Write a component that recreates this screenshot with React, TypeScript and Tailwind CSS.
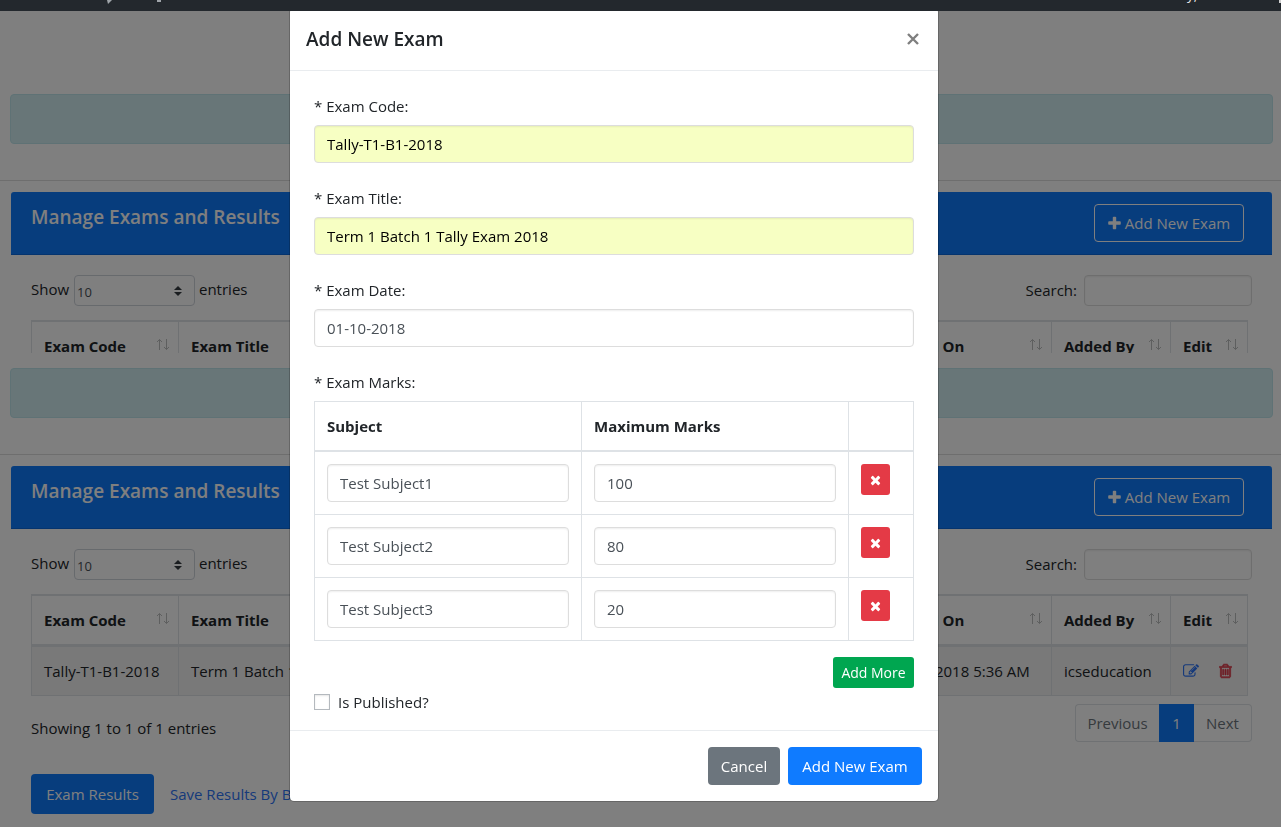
import React, { useState } from 'react';

interface Subject {
    name: string;
    marks: string;
}

interface ExamRow {
    code: string;
    title: string;
    date: string;
    addedOn: string;
    addedBy: string;
}

const exams: ExamRow[] = [
    {
        code: 'Tally-T1-B1-2018',
        title: 'Term 1 Batch 1 Tally Exam 2018',
        date: '01-10-2018',
        addedOn: '01-10-2018 5:36 AM',
        addedBy: 'icseducation',
    },
];

const columns = [
    { label: 'Exam Code', width: 'w-[147px]' },
    { label: 'Exam Title', width: '' },
    { label: 'Exam Date', width: 'w-[160px]' },
    { label: 'Added On', width: 'w-[173px]' },
    { label: 'Added By', width: 'w-[119px]' },
    { label: 'Edit', width: 'w-[77px]' },
];

const inputClass = 'block w-full h-[38px] px-3 border border-[#dddddd] rounded bg-white text-[#495057] shadow-[inset_0_1px_2px_rgba(0,0,0,0.07)]';

const PlusIcon = () => (
    <svg viewBox="0 0 1408 1792" className="h-4 w-[13px]" fill="currentColor" aria-hidden="true">
        <path d="M1408 800v192q0 40-28 68t-68 28h-416v416q0 40-28 68t-68 28h-192q-40 0-68-28t-28-68v-416h-416q-40 0-68-28t-28-68v-192q0-40 28-68t68-28h416v-416q0-40 28-68t68-28h192q40 0 68 28t28 68v416h416q40 0 68 28t28 68z" />
    </svg>
);

const TimesIcon = () => (
    <svg viewBox="0 0 1408 1792" className="h-[14px] w-[11px]" fill="currentColor" aria-hidden="true">
        <path d="M1298 1322q0 40-28 68l-136 136q-28 28-68 28t-68-28l-294-294-294 294q-28 28-68 28t-68-28l-136-136q-28-28-28-68t28-68l294-294-294-294q-28-28-28-68t28-68l136-136q28-28 68-28t68 28l294 294 294-294q28-28 68-28t68 28l136 136q28 28 28 68t-28 68l-294 294 294 294q28 28 28 68z" />
    </svg>
);

const EditIcon = () => (
    <svg viewBox="0 0 1792 1792" className="size-4" fill="currentColor" aria-hidden="true">
        <path d="M888 1184l116-116-152-152-116 116v56h96v96h56zm440-720q-16-16-33 1l-350 350q-17 17-1 33t33-1l350-350q17-17 1-33zm80 594v190q0 119-84.5 203.5t-203.5 84.5h-832q-119 0-203.5-84.5t-84.5-203.5v-832q0-119 84.5-203.5t203.5-84.5h832q63 0 117 25 15 7 18 23 3 17-9 29l-49 49q-14 14-32 8-23-6-45-6h-832q-66 0-113 47t-47 113v832q0 66 47 113t113 47h832q66 0 113-47t47-113v-126q0-13 9-22l64-64q15-15 35-7t20 29zm-96-738l288 288-672 672h-288v-288zm444 132l-92 92-288-288 92-92q28-28 68-28t68 28l152 152q28 28 28 68t-28 68z" />
    </svg>
);

const TrashIcon = () => (
    <svg viewBox="0 0 1408 1792" className="h-4 w-[13px]" fill="currentColor" stroke="currentColor" strokeWidth="70" aria-hidden="true">
        <path d="M512 736v576q0 14-9 23t-23 9h-64q-14 0-23-9t-9-23v-576q0-14 9-23t23-9h64q14 0 23 9t9 23zm256 0v576q0 14-9 23t-23 9h-64q-14 0-23-9t-9-23v-576q0-14 9-23t23-9h64q14 0 23 9t9 23zm256 0v576q0 14-9 23t-23 9h-64q-14 0-23-9t-9-23v-576q0-14 9-23t23-9h64q14 0 23 9t9 23zm128 724v-948h-896v948q0 22 7 40.500t14.500 27 10.500 8.500h832q3 0 10.500-8.500t14.500-27 7-40.500zm-672-1076h448l-48-117q-7-9-17-11h-317q-10 2-17 11zm928 32v64q0 14-9 23t-23 9h-96v948q0 83-47 143.500t-113 60.500h-832q-66 0-113-58.500t-47-141.500v-952h-96q-14 0-23-9t-9-23v-64q0-14 9-23t23-9h309l70-167q15-37 54-63t79-26h320q40 0 79 26t54 63l70 167h309q14 0 23 9t9 23z" />
    </svg>
);

const SortIcon = () => (
    <svg viewBox="0 0 14 13" className="h-[13px] w-[14px] text-[#bcbebf]" fill="none" stroke="currentColor" aria-hidden="true">
        <path d="M3.500 12V1.500M1 4l2.500-2.500L6 4M10.500 1v10.500M8 9l2.500 2.500L13 9" />
    </svg>
);

const AdminBar = () => (
    <header className="relative z-20 h-[11px] overflow-hidden bg-[#23282d]">
        <div className="flex justify-between text-[13px] leading-4 text-[#eeeeee]">
            <svg width="180" height="11" viewBox="0 0 180 11" fill="#a0a5aa" aria-hidden="true">
                <path d="M107 0h5l-4 4zM157 0h4v2h-4z" />
            </svg>
            <div className="-mt-[13px] flex">
                <span className="mr-[82px]">Howdy,</span>
                <span className="mt-[13px] h-[3px] w-[2px] bg-[#d0d0d0]" />
            </div>
        </div>
    </header>
);

const ExamPanel: React.FC<{ id: string; clipped?: boolean }> = ({ id, clipped }) => (
    <section>
        <div className="mr-2 ml-[10px] h-[50px] rounded border border-[#bee5eb] bg-[#d1ecf1]" />
        <hr className="mt-9 mb-[11px] border-[#dddddd]" />
        <div className="mr-[9px] ml-[11px]">
            <div className="flex items-start justify-between rounded-t-[3px] border-b border-[#0a68dd] bg-[#0f7afb] py-3 pr-7 pl-5 text-white">
                <h2 className="text-[19px] leading-[26px] font-semibold">Manage Exams and Results</h2>
                <button type="button" className="flex h-[38px] w-[150px] items-center justify-center gap-1 rounded border border-white">
                    <PlusIcon />
                    Add New Exam
                </button>
            </div>
            <div className={clipped ? 'h-[98px] overflow-hidden px-5 pt-5' : 'px-5 pt-5'}>
                <div className="flex justify-between">
                    <div className="flex items-start gap-1">
                        <label htmlFor={`${id}-length`} className="w-[39px] leading-7">Show</label>
                        <div className="relative">
                            <select
                                id={`${id}-length`}
                                defaultValue="10"
                                className="h-[31px] w-[121px] appearance-none rounded border border-[#ced4da] bg-white pt-[2px] pl-[2px] text-[13px] text-[#495057]"
                            >
                                <option>10</option>
                                <option>25</option>
                                <option>50</option>
                                <option>100</option>
                            </select>
                            <svg viewBox="0 0 4 5" className="pointer-events-none absolute top-[11px] right-[13px] h-[10px] w-2" fill="#343a40" aria-hidden="true">
                                <path d="M2 0L0 2h4zm0 5L0 3h4z" />
                            </svg>
                        </div>
                        <span className="leading-7">entries</span>
                    </div>
                    <div className="flex gap-[7px]">
                        <label htmlFor={`${id}-search`} className="leading-[30px]">Search:</label>
                        <input id={`${id}-search`} type="search" className="h-[31px] w-[168px] rounded border border-[#dddddd] px-2 text-sm shadow-[inset_0_1px_2px_rgba(0,0,0,0.07)]" />
                    </div>
                </div>
                <div className="mt-[14px] pr-1">
                    <table className="w-full table-fixed border-collapse border border-[#dee2e6]">
                        <thead>
                            <tr className="border-t-2 border-b-3 border-[#dee2e6]">
                                {columns.map((column) => (
                                    <th key={column.label} className={`border-x border-[#dee2e6] pt-3 pr-2 pb-3 pl-3 text-left font-bold whitespace-nowrap ${column.width}`}>
                                        <span className="flex items-start justify-between">
                                            {column.label}
                                            <span className="pt-1"><SortIcon /></span>
                                        </span>
                                    </th>
                                ))}
                            </tr>
                        </thead>
                        {!clipped && (
                            <tbody>
                                {exams.map((exam) => (
                                    <tr key={exam.code} className="bg-[#f2f2f2]">
                                        <td className="border border-[#dee2e6] p-3 whitespace-nowrap">{exam.code}</td>
                                        <td className="border border-[#dee2e6] p-3 whitespace-nowrap">{exam.title}</td>
                                        <td className="border border-[#dee2e6] p-3 whitespace-nowrap">{exam.date}</td>
                                        <td className="border border-[#dee2e6] p-3 whitespace-nowrap">{exam.addedOn}</td>
                                        <td className="border border-[#dee2e6] p-3 whitespace-nowrap">{exam.addedBy}</td>
                                        <td className="border border-[#dee2e6] p-3">
                                            <span className="flex items-center gap-5">
                                                <button type="button" aria-label="Edit exam" className="text-[#2d74f5]"><EditIcon /></button>
                                                <button type="button" aria-label="Delete exam" className="text-[#dc3545]"><TrashIcon /></button>
                                            </span>
                                        </td>
                                    </tr>
                                ))}
                            </tbody>
                        )}
                    </table>
                </div>
                {!clipped && (
                    <>
                        <div className="mt-2 flex items-start justify-between">
                            <p className="pt-3">Showing 1 to 1 of 1 entries</p>
                            <nav aria-label="Pagination" className="flex h-[38px] text-[#6c757d]">
                                <button type="button" className="w-[84px] rounded-l border border-r-0 border-[#dee2e6]">Previous</button>
                                <button type="button" className="w-[35px] bg-[#0f7afb] text-white">1</button>
                                <button type="button" className="w-[58px] rounded-r border border-l-0 border-[#dee2e6]">Next</button>
                            </nav>
                        </div>
                        <div className="mt-8 flex items-center gap-4">
                            <button type="button" className="h-10 w-[123px] rounded bg-[#0f7afb] text-white">Exam Results</button>
                            <a href="#save-results" className="text-[#2d74f5]">Save Results By Batch</a>
                        </div>
                    </>
                )}
            </div>
        </div>
    </section>
);

const ExamModal = () => {
    const [code, setCode] = useState('Tally-T1-B1-2018');
    const [title, setTitle] = useState('Term 1 Batch 1 Tally Exam 2018');
    const [date, setDate] = useState('01-10-2018');
    const [published, setPublished] = useState(false);
    const [subjects, setSubjects] = useState<Subject[]>([
        { name: 'Test Subject1', marks: '100' },
        { name: 'Test Subject2', marks: '80' },
        { name: 'Test Subject3', marks: '20' },
    ]);

    const updateSubject = (index: number, changes: Partial<Subject>) => {
        setSubjects(subjects.map((s, i) => (i === index ? { ...s, ...changes } : s)));
    };

    return (
        <div className="fixed inset-0 z-10 flex items-start justify-center overflow-hidden bg-black/50 pt-[7px] pr-[53px]">
            <div role="dialog" aria-labelledby="exam-modal-title" className="w-full max-w-[650px] rounded-[5px] border border-black/20 bg-white bg-clip-padding">
                <div className="flex items-center justify-between border-b border-[#e9ecef] py-4 pr-[18px] pl-4">
                    <h5 id="exam-modal-title" className="text-[19px] leading-[30px] font-semibold">Add New Exam</h5>
                    <button type="button" aria-label="Close" className="text-[#7f7f7f]">
                        <svg viewBox="0 0 14 14" className="size-[14px]" stroke="currentColor" strokeWidth="2.400" aria-hidden="true">
                            <path d="M2 2l10 10M12 2L2 12" />
                        </svg>
                    </button>
                </div>

                <div className="px-6 pt-[23px] pb-4">
                    <div className="flex flex-col gap-[23px]">
                        <div>
                            <label htmlFor="exam-code" className="mb-[7px] block">* Exam Code:</label>
                            <input id="exam-code" value={code} onChange={(e) => setCode(e.target.value)} className="block h-[38px] w-full rounded border border-[#dddddd] bg-[#f7ffc3] px-3 text-black shadow-[inset_0_1px_2px_rgba(0,0,0,0.07)]" />
                        </div>
                        <div>
                            <label htmlFor="exam-title" className="mb-[7px] block">* Exam Title:</label>
                            <input id="exam-title" value={title} onChange={(e) => setTitle(e.target.value)} className="block h-[38px] w-full rounded border border-[#dddddd] bg-[#f7ffc3] px-3 text-black shadow-[inset_0_1px_2px_rgba(0,0,0,0.07)]" />
                        </div>
                        <div>
                            <label htmlFor="exam-date" className="mb-[7px] block">* Exam Date:</label>
                            <input id="exam-date" value={date} onChange={(e) => setDate(e.target.value)} className={inputClass} />
                        </div>
                        <div>
                            <p id="exam-marks" className="mb-[7px]">* Exam Marks:</p>
                            <table aria-labelledby="exam-marks" className="w-full table-fixed border-collapse border border-[#dee2e6]">
                                <thead>
                                    <tr className="border-b-2 border-[#dee2e6] text-left">
                                        <th className="border-r border-[#dee2e6] p-3 font-bold">Subject</th>
                                        <th className="border-r border-[#dee2e6] p-3 font-bold">Maximum Marks</th>
                                        <th className="w-[65px]"></th>
                                    </tr>
                                </thead>
                                <tbody>
                                    {subjects.map((subject, index) => (
                                        <tr key={index} className="border-b border-[#dee2e6] align-top">
                                            <td className="border-r border-[#dee2e6] p-3">
                                                <input aria-label="Subject" value={subject.name} onChange={(e) => updateSubject(index, { name: e.target.value })} className={inputClass} />
                                            </td>
                                            <td className="border-r border-[#dee2e6] p-3">
                                                <input aria-label="Maximum marks" value={subject.marks} onChange={(e) => updateSubject(index, { marks: e.target.value })} className={inputClass} />
                                            </td>
                                            <td className="p-3">
                                                <button
                                                    type="button"
                                                    aria-label="Remove subject"
                                                    onClick={() => setSubjects(subjects.filter((_, i) => i !== index))}
                                                    className="flex h-[31px] w-[29px] items-center justify-center rounded-[3px] bg-[#e43a46] text-white"
                                                >
                                                    <TimesIcon />
                                                </button>
                                            </td>
                                        </tr>
                                    ))}
                                </tbody>
                            </table>
                        </div>
                    </div>
                    <div className="mt-4 flex justify-end">
                        <button
                            type="button"
                            onClick={() => setSubjects([...subjects, { name: '', marks: '' }])}
                            className="h-[31px] w-[81px] rounded-[3px] bg-[#00a650] text-sm text-white"
                        >
                            Add More
                        </button>
                    </div>
                    <label className="mt-[2px] flex items-center gap-2">
                        <input
                            type="checkbox"
                            checked={published}
                            onChange={(e) => setPublished(e.target.checked)}
                            className="size-4 appearance-none border border-[#b4b9be] bg-white shadow-[inset_0_1px_2px_rgba(0,0,0,0.1)] checked:bg-[#0f7afb]"
                        />
                        Is Published?
                    </label>
                </div>

                <div className="flex justify-end gap-2 border-t border-[#e9ecef] p-4">
                    <button type="button" className="h-[38px] w-[72px] rounded bg-[#6c757d] text-white">Cancel</button>
                    <button type="button" className="h-[38px] w-[134px] rounded bg-[#0f7bff] text-white">Add New Exam</button>
                </div>
            </div>
        </div>
    );
};

const App: React.FC = () => {
    return (
        <div className="h-screen overflow-hidden bg-white font-['Open_Sans','Noto_Sans',sans-serif] text-[15px] leading-6 text-[#212529]">
            <AdminBar />
            <main className="flex flex-col gap-[15px] pt-[83px]">
                <ExamPanel id="exams-top" clipped />
                <ExamPanel id="exams" />
            </main>
            <ExamModal />
        </div>
    );
};

export default App;
